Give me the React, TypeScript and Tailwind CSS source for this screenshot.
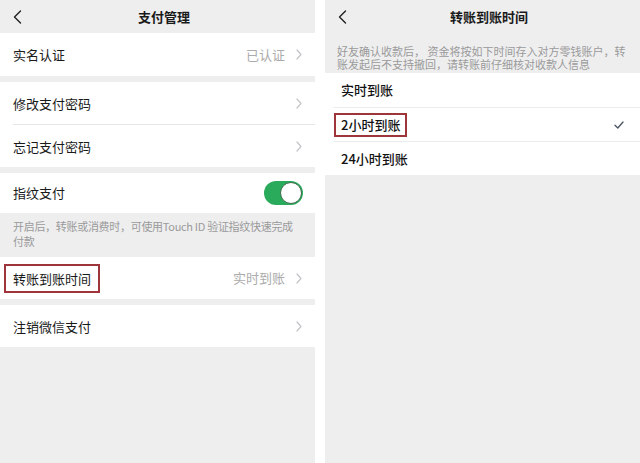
import React from "react";

const FONT = "font-['Noto_Sans_CJK_SC','Noto_Sans',sans-serif]";

function Back() {
  return (
    <svg width="9" height="14" viewBox="0 0 9 14" fill="none">
      <path d="M7.5 1 L1.5 7 L7.5 13" stroke="#222" strokeWidth="1.4" strokeLinecap="round" strokeLinejoin="round" />
    </svg>
  );
}

function Chevron() {
  return (
    <svg width="6" height="11" viewBox="0 0 6 11" fill="none">
      <path d="M1 1 L5 5.5 L1 10" stroke="#c4c4c8" strokeWidth="1.2" strokeLinecap="round" strokeLinejoin="round" />
    </svg>
  );
}

function Header({ title, pad }: { title: string; pad: string }) {
  return (
    <div className={`grid h-[33px] grid-cols-[40px_1fr_40px] items-center ${pad}`}>
      <Back />
      <div className="text-center text-[13px] font-bold text-[#1a1a1a]">{title}</div>
      <div />
    </div>
  );
}

function Row({ label, value, h = "h-[42px]", boxed = false }: { label: string; value?: string; h?: string; boxed?: boolean }) {
  return (
    <div className={`flex ${h} items-center justify-between bg-white pl-[13px] pr-[13px]`}>
      {boxed ? (
        <span className="-ml-[9px] border-2 border-[#9e353b] px-[7px] py-[4px] text-[13px] leading-[17px] text-[#1a1a1a]">
          {label}
        </span>
      ) : (
        <span className="text-[13px] leading-[17px] text-[#1a1a1a]">{label}</span>
      )}
      <span className="flex items-center gap-[11px]">
        {value && <span className="text-[13px] text-[#ababab]">{value}</span>}
        <Chevron />
      </span>
    </div>
  );
}

function Gap() {
  return <div className="h-[6px]" />;
}

function Toggle() {
  return (
    <div className="flex h-[24px] w-[39px] items-center justify-end rounded-full bg-[#29ab5b] p-[1px]">
      <div className="h-[22px] w-[22px] rounded-full border border-[#3c6b4c] bg-white" />
    </div>
  );
}

function PaymentSettings() {
  return (
    <div className="flex h-[463px] w-[315px] flex-col bg-[#eeeeef]">
      <Header title="支付管理" pad="pl-[13px]" />
      <Row label="实名认证" value="已认证" h="h-[43px]" />
      <Gap />
      <div className="bg-white">
        <Row label="修改支付密码" />
        <div className="ml-[13px] h-px bg-[#e6e6e6]" />
        <Row label="忘记支付密码" />
      </div>
      <Gap />
      <div className="flex h-[40px] items-center justify-between bg-white pl-[13px] pr-[12px]">
        <span className="text-[13px] text-[#1a1a1a]">指纹支付</span>
        <Toggle />
      </div>
      <div className="h-[44px] pl-[13px] pt-[6px] text-[11px] leading-[15px] tracking-[-0.3px] text-[#9a9a9a]">
        <div className="whitespace-nowrap">开启后，转账或消费时，可使用Touch ID 验证指纹快速完成</div>
        <div>付款</div>
      </div>
      <Row label="转账到账时间" value="实时到账" boxed />
      <Gap />
      <Row label="注销微信支付" />
    </div>
  );
}

const OPTIONS = ["实时到账", "2小时到账", "24小时到账"];

function ArrivalTime() {
  const selected = 1;
  return (
    <div className="flex h-[463px] flex-1 flex-col bg-[#eeeeef]">
      <Header title="转账到账时间" pad="pl-[13px]" />
      <div className="h-[40px] pl-[12px] pr-[10px] pt-[12px] text-[11px] leading-[13px] text-[#9a9a9a]">
        好友确认收款后， 资金将按如下时间存入对方零钱账户，转账发起后不支持撤回，请转账前仔细核对收款人信息
      </div>
      <div className="bg-white">
        {OPTIONS.map((o, i) => (
          <div key={o}>
            {i > 0 && <div className="ml-[8px] h-px bg-[#ececec]" />}
            <div className={`flex ${i === 0 ? "h-[34px]" : "h-[33px]"} items-center justify-between pl-[16px] pr-[16px]`}>
              {i === selected ? (
                <span className="-ml-[7px] border-2 border-[#9e353b] px-[5px] py-[2px] text-[13px] font-medium leading-[16px] text-[#111]">
                  {o}
                </span>
              ) : (
                <span className="text-[13px] font-medium leading-[16px] text-[#111]">{o}</span>
              )}
              {i === selected && (
                <svg width="10" height="8" viewBox="0 0 10 8" fill="none">
                  <path d="M1 4.2 L3.8 7 L9 1" stroke="#4a5563" strokeWidth="1.3" strokeLinecap="round" strokeLinejoin="round" />
                </svg>
              )}
            </div>
          </div>
        ))}
      </div>
    </div>
  );
}

export default function App() {
  return (
    <div className={`flex h-[463px] w-[640px] gap-[10px] overflow-hidden bg-white ${FONT}`}>
      <PaymentSettings />
      <ArrivalTime />
    </div>
  );
}
